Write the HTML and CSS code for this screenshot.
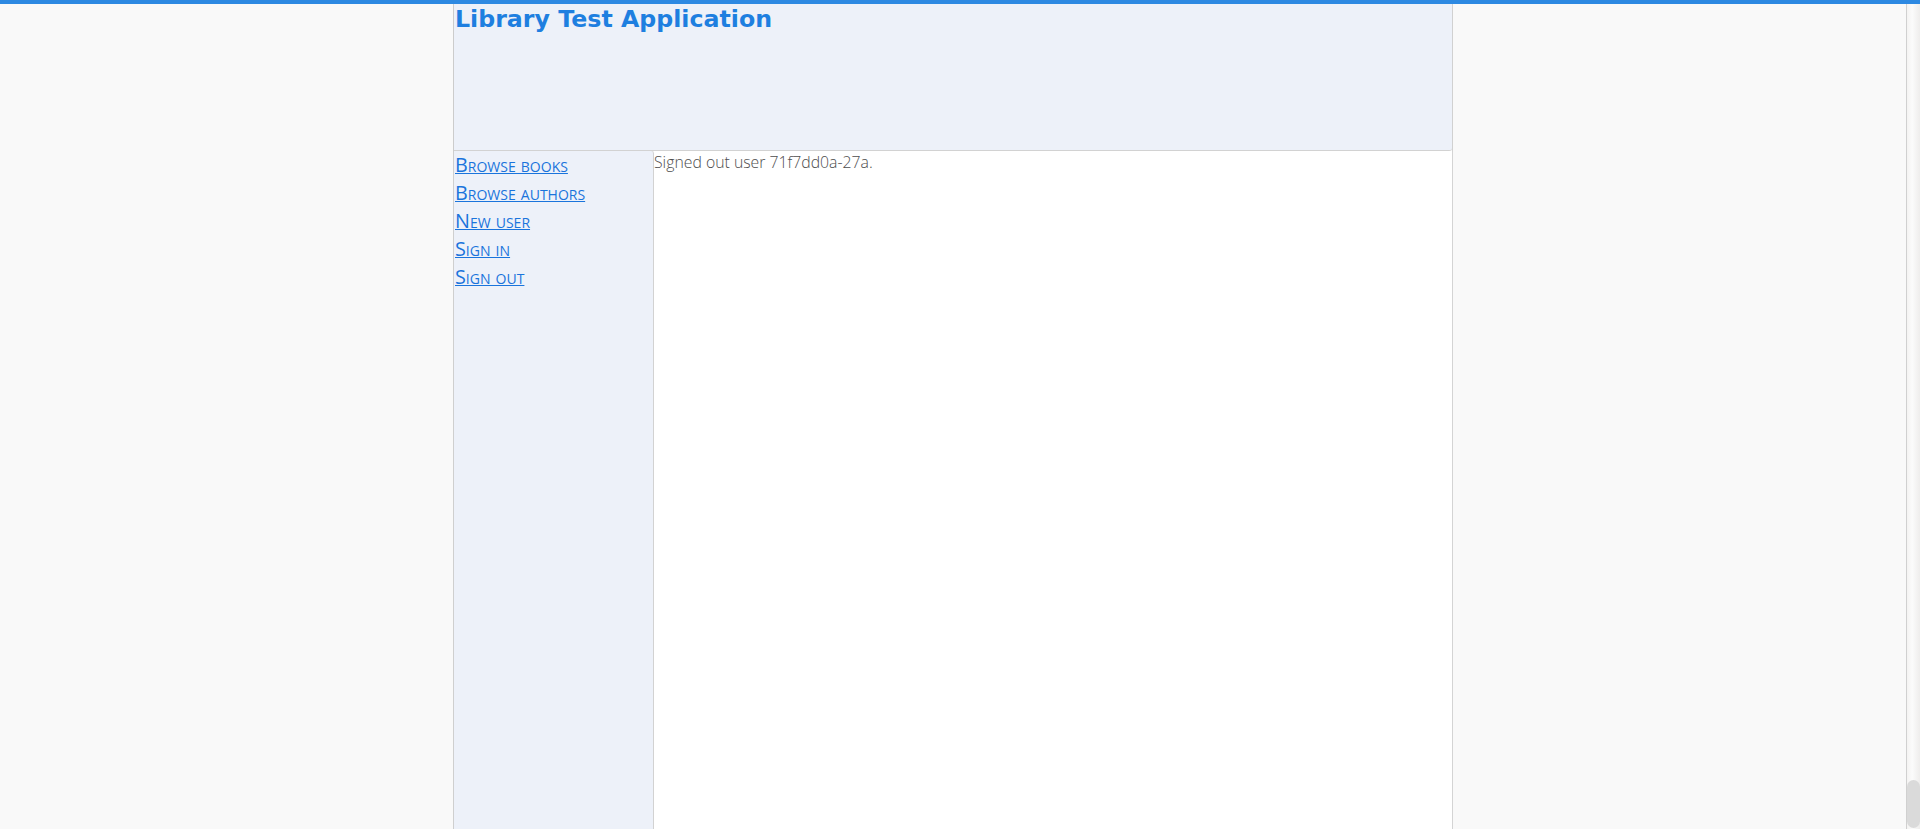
FILE: index.html
```html
<!DOCTYPE html>
<html lang="en">
<head>
<meta charset="utf-8">
<title>Library Test Application</title>
<link rel="stylesheet" href="styles.css">
</head>
<body>
<div class="topbar"></div>
<div class="viewport">
  <div class="page">
    <div class="frame">
      <header class="header">
        <h1 class="title">Library Test Application</h1>
      </header>
      <div class="main">
        <nav class="sidebar">
          <a href="#" class="navlink">Browse books</a>
          <a href="#" class="navlink">Browse authors</a>
          <a href="#" class="navlink">New user</a>
          <a href="#" class="navlink">Sign in</a>
          <a href="#" class="navlink">Sign out</a>
        </nav>
        <section class="content">
          <p class="message">Signed out user 71f7dd0a-27a.</p>
        </section>
      </div>
    </div>
  </div>
  <div class="scrollbar">
    <div class="track"></div>
    <div class="thumb"></div>
  </div>
</div>
</body>
</html>
```
FILE: styles.css
```css
* {
  box-sizing: border-box;
}
html, body {
  margin: 0;
  padding: 0;
  height: 100%;
  overflow: hidden;
}
body {
  display: flex;
  flex-direction: column;
  background: #f9f9f9;
  font-family: "Open Sans", "Liberation Sans", sans-serif;
}
.topbar {
  height: 4px;
  flex: none;
  background: #2d89e2;
}
.viewport {
  flex: 1;
  display: flex;
  min-height: 0;
}
.page {
  flex: 1;
  display: flex;
  justify-content: center;
  background: #f9f9f9;
}
.frame {
  width: 1000px;
  display: flex;
  flex-direction: column;
  border-left: 1px solid #cfcfcf;
  border-right: 1px solid #d4d4d4;
  background: #ffffff;
}
.header {
  height: 147px;
  flex: none;
  background: #edf1f9;
  border-bottom: 1px solid #d2d2d2;
  border-bottom-right-radius: 3px;
  box-shadow: 0 1px 2px rgba(0,0,0,0.06);
}
.title {
  margin: 0;
  padding: 1px 0 0 1px;
  font-family: "DejaVu Sans", sans-serif;
  font-weight: bold;
  font-size: 23.7px;
  line-height: 28px;
  color: #1e7fe0;
}
.main {
  flex: 1;
  display: flex;
  min-height: 0;
}
.sidebar {
  width: 200px;
  flex: none;
  display: flex;
  flex-direction: column;
  background: #edf1f9;
  border-right: 1px solid #d2d2d2;
  border-top-right-radius: 3px;
  padding-left: 1px;
}
.navlink {
  font-family: "Open Sans", sans-serif;
  font-variant: small-caps;
  font-weight: 500;
  font-size: 19.8px;
  line-height: 28px;
  color: #1a74dc;
  text-decoration: underline;
  align-self: flex-start;
}
.content {
  flex: 1;
  background: #ffffff;
}
.message {
  margin: 0;
  font-family: "Open Sans", sans-serif;
  font-weight: 300;
  font-size: 15.8px;
  color: #4d4d4d;
}
.scrollbar {
  width: 14px;
  flex: none;
  display: flex;
  flex-direction: column;
  border-left: 1px solid #d0d0d0;
  background: linear-gradient(to right, #f4f3f2, #fbfbfb 40%, #eeedec);
}
.track {
  flex: 1;
}
.thumb {
  height: 48px;
  margin: 0 0 1px 0;
  border-radius: 7px;
  background: #dadada;
}
```
